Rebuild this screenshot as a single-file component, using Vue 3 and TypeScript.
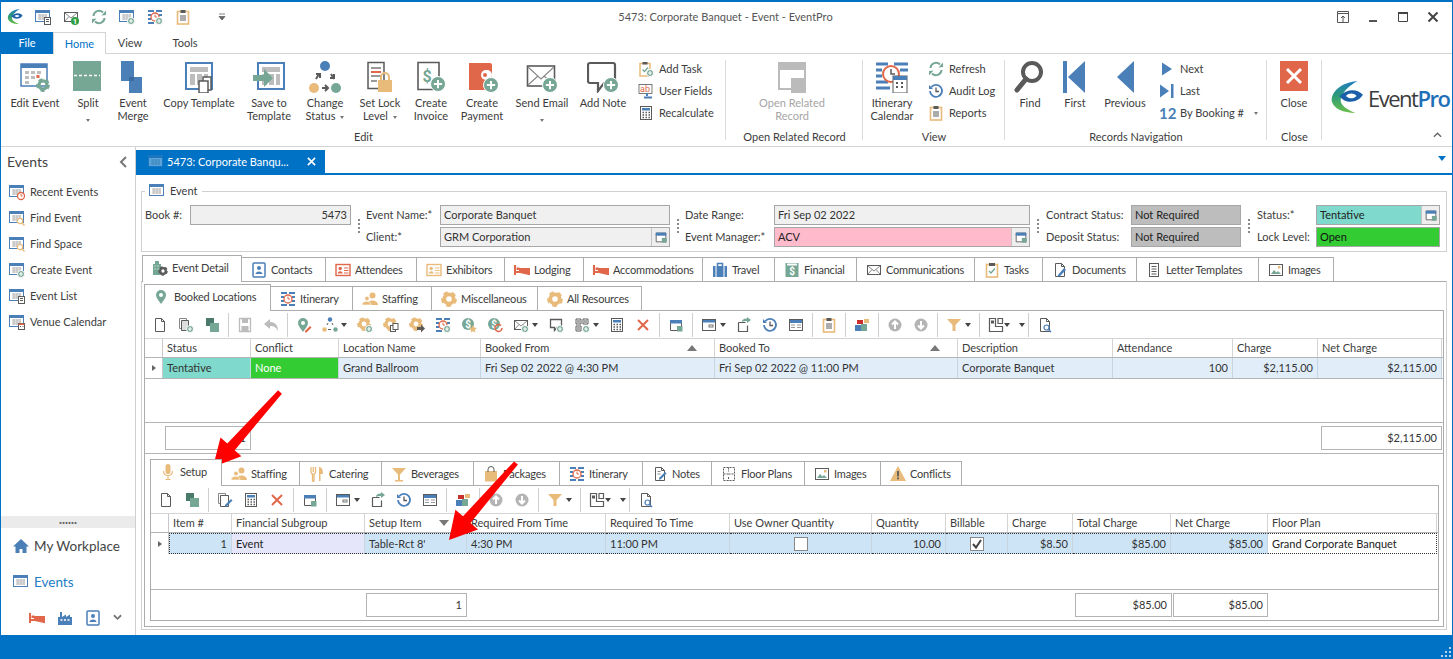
<script setup lang="ts">
const B = '#4a7fb8', G = '#76a795', O = '#e0674a', T = '#e9bb7b', D = '#5a5a5a', L = '#bcbcbc';

const plus = (x: number, y: number, r = 4) =>
  `<circle cx="${x}" cy="${y}" r="${r}" fill="${G}" stroke="#fff"/><path d="M${x - r * 0.55} ${y}h${r * 1.1}M${x} ${y - r * 0.55}v${r * 1.1}" stroke="#fff" stroke-width="${r > 5 ? 2 : 1.2}"/>`;
const gear = (x: number, y: number, r: number, c = T) =>
  `<circle cx="${x}" cy="${y}" r="${r * 0.62}" fill="none" stroke="${c}" stroke-width="${r * 0.5}"/><circle cx="${x}" cy="${y}" r="${r * 0.9}" fill="none" stroke="${c}" stroke-width="${r * 0.32}" stroke-dasharray="${r * 0.62} ${r * 0.52}"/>`;
const cal = `<rect x=".5" y="1.5" width="14" height="11" fill="#fff" stroke="${B}"/><rect x="1" y="2" width="13" height="2" fill="${B}"/><path d="M3 6h9M3 8h9M3 10h9M5 5v6M8 5v6M11 5v6" stroke="#b9b9b9"/>`;
const win = `<path d="M2.5 3.5h11v10h-11z" fill="#fff" stroke="${D}"/><rect x="2" y="3" width="12" height="3.5" fill="${B}"/><rect x="9" y="9" width="5.5" height="5.5" fill="${G}"/>`;
const itin = `<path d="M1 2h6M9 2h6M1 6h3M1 10h3M1 14h6M9 14h6M12 6h3M12 10h3" stroke="${B}" stroke-width="2"/><circle cx="8" cy="8" r="4" fill="#fff" stroke="${O}" stroke-width="1.3"/><path d="M8 5.5V8h2" stroke="${O}" fill="none"/>`;
const doc = `<path d="M3.5 1.5h6l3 3v10h-9z" fill="#fff" stroke="${D}"/><path d="M9.5 1.5v3h3" fill="none" stroke="${D}"/>`;
const mail = `<rect x="1.5" y="3.5" width="13" height="9" fill="#fff" stroke="${D}"/><path d="M2 4l6 5 6-5M2 12l4-4.5M14 12l-4-4.5" fill="none" stroke="#8a8a8a"/>`;
const bubble = `<path d="M2.5 2.5h11v8H9l-2.5 3v-3h-4z" fill="#fff" stroke="${D}" stroke-width="1.3"/>`;
const calc = `<rect x="2.5" y="1.5" width="11" height="13" fill="#fff" stroke="${D}"/><rect x="4" y="3" width="8" height="2.5" fill="${B}"/><path d="M4.5 7.5h1.5M7.5 7.5H9M10.5 7.5H12M4.5 10h1.5M7.5 10H9M10.5 10H12M4.5 12.5h1.5M7.5 12.5H9M10.5 12.5H12" stroke="${D}" stroke-width="1.3"/>`;
const clip = `<rect x="2.5" y="2.5" width="11" height="12.5" fill="#fff" stroke="${T}" stroke-width="1.6"/><rect x="5.5" y="1" width="5" height="3" fill="${D}"/><path d="M5 7h6M5 9h6M5 11h6" stroke="${D}"/>`;
const coin = (c = G) => `<circle cx="7" cy="7" r="6" fill="${c}"/><text x="7" y="10.5" font-size="10" font-family="Roboto" font-weight="700" text-anchor="middle" fill="#fff">$</text>`;
const grid4 = `<path d="M2 2h5v5H2zM9 2h5v5H9zM2 9h5v5H2z" fill="#fff" stroke="${D}"/><path d="M3 3h3v3H3zM10 3h3v3h-3zM3 10h3v3H3z" fill="#a9a9a9"/>`;
const boxes = `<rect x="1" y="8" width="6" height="6" fill="${B}"/><rect x="7" y="7" width="6" height="7" fill="${G}"/><rect x="3" y="3" width="6" height="4" fill="#c9302c"/><rect x="10" y="2" width="5" height="4" fill="${T}"/>`;
const card = (c: string) => `<rect x="1" y="2.5" width="14" height="11" fill="#fff" stroke="${c}" stroke-width="1.4"/><circle cx="5.2" cy="6.5" r="1.7" fill="${c}"/><path d="M2.8 11.5c0-3 4.8-3 4.8 0z" fill="${c}"/><path d="M9 6h4.5M9 8.5h4.5M9 11h4.5" stroke="${c}"/>`;
const bed = `<path d="M1 3v10M1 10h14v3M15 10V7H6V10" stroke="${O}" stroke-width="2" fill="${O}"/><rect x="2.5" y="5.5" width="3" height="2.5" fill="${O}"/>`;
const people = `<circle cx="10.5" cy="4.5" r="3" fill="${T}"/><path d="M5 14c0-6 11-6 11 0z" fill="${T}"/><circle cx="5" cy="7.5" r="2.2" fill="${T}" stroke="#fff" stroke-width=".6"/><path d="M0 14c0-5 9-5 9 0z" fill="${T}" stroke="#fff" stroke-width=".6"/>`;
const picture = `<rect x="1.5" y="2.5" width="13" height="11" fill="#fff" stroke="${D}"/><path d="M3 12l3-4 2.5 2.5L10 9l3 3z" fill="${G}"/><rect x="10" y="4" width="2.5" height="2.5" fill="${T}"/>`;
const ud = (d: string) => `<circle cx="8" cy="8" r="6.5" fill="#b4b4b4"/><path d="${d}" stroke="#fff" stroke-width="2" fill="none"/>`;
const clock = `<path d="M3.2 4.2A6 6 0 1 1 2 8" fill="none" stroke="${B}" stroke-width="1.8"/><path d="M1 2v4h4z" fill="${B}"/><path d="M8 4.5V8.500h3" fill="none" stroke="${D}" stroke-width="1.3"/>`;
const table = `<rect x="1.5" y="2.5" width="13" height="11" fill="#fff" stroke="${D}"/><rect x="2" y="3" width="12" height="3" fill="${B}"/><path d="M3 8h4M3 10.500h4M9 8h4M9 10.500h4" stroke="#999" stroke-width="1.2"/>`;
const funnel = `<path d="M1 2h14l-5.500 6v6h-3V8z" fill="${T}"/>`;
const layout = `<path d="M1.500 1.500h6v8h7v5h-13zM10 1.500h4.500v5H10z" fill="#fff" stroke="${D}" stroke-width="1.200"/><rect x="3" y="3.500" width="3" height="3" fill="${D}"/>`;
const gridwin = `<rect x="1.500" y="2.500" width="13" height="11" fill="#fff" stroke="${D}"/><rect x="2" y="3" width="12" height="2.500" fill="${B}"/><rect x="8" y="8" width="4" height="2" fill="none" stroke="#777"/>`;
const exportI = `<path d="M2.500 5.500h7M2.500 5.500v9h9v-6" fill="none" stroke="${D}" stroke-width="1.200"/><path d="M6 5c0-3 3-3.500 5-3.500V0l4 3-4 3V4C9 4 7 4 6 5z" fill="${G}"/>`;
const searchDoc = `${doc}<circle cx="9.500" cy="10.500" r="2.500" fill="#fff" stroke="${B}" stroke-width="1.200"/><path d="M11.500 12.500l2.500 2.500" stroke="${B}" stroke-width="1.400"/>`;
const tree = `<circle cx="8" cy="2.500" r="2.200" fill="${B}"/><circle cx="2.500" cy="12.500" r="2.200" fill="${T}"/><circle cx="13.500" cy="12.500" r="2.200" fill="${G}"/><path d="M6 12.500h3M5 8l1-2M11 8l-1-2" stroke="${D}"/>`;
const pin = `<path d="M7 1a5 5 0 0 1 5 5c0 3-3 6-5 9-2-3-5-6-5-9a5 5 0 0 1 5-5z" fill="${G}"/><circle cx="7" cy="6" r="2" fill="#fff"/>`;

const icons: Record<string, string> = {
  editEvent: `<rect x="2" y="3" width="26" height="22" fill="#fff" stroke="${B}" stroke-width="1.500"/><rect x="2" y="3" width="26" height="4" fill="${B}"/><path d="M6 10h4v3H6zM12 10h4v3h-4zM18 10h4v3h-4zM6 15h4v3H6zM12 15h4v3h-4zM6 20h4v3H6z" fill="#bdbdbd"/><rect x="17.500" y="14" width="3" height="3" fill="${O}"/>${gear(24, 24, 6.500, G)}`,
  split: `<rect x="1" y="0" width="28" height="13" fill="${G}"/><rect x="1" y="16" width="28" height="14" fill="${G}"/><rect x="1" y="13" width="28" height="3" fill="${G}"/><path d="M2 14.500h26" stroke="#fff" stroke-width="1.500" stroke-dasharray="3 2"/>`,
  merge: `<rect x="4" y="0" width="13" height="20" fill="${B}"/><rect x="12" y="16" width="13" height="16" fill="${B}"/><rect x="12" y="16" width="5" height="4" fill="#3a6ba0"/>`,
  copyT: `<rect x="3" y="2" width="26" height="26" fill="#fff" stroke="${B}" stroke-width="2"/><rect x="7" y="6" width="18" height="5" fill="#bdbdbd"/><path d="M7 13h5v11H7zM14 13h5v11h-5zM21 13h4v11h-4z" fill="#bdbdbd"/><rect x="20" y="16" width="8" height="13" fill="#fff" stroke="${D}" stroke-width="1.500"/><rect x="16" y="20" width="9" height="12" fill="#fff" stroke="${D}" stroke-width="1.500"/>`,
  saveT: `<rect x="5" y="2" width="26" height="26" fill="#fff" stroke="${B}" stroke-width="2"/><rect x="9" y="6" width="18" height="5" fill="#bdbdbd"/><path d="M9 13h5v11H9zM16 13h5v11h-5zM23 13h4v11h-4z" fill="#bdbdbd"/><path d="M0 14h11V8l9 9-9 9v-6H0z" fill="${G}"/>`,
  change: `<circle cx="16" cy="5" r="5" fill="${B}"/><circle cx="5" cy="27" r="5" fill="${T}"/><circle cx="27" cy="27" r="5" fill="${G}"/><path d="M13 27h6M16 24l3 3-3 3M10 13l-3 5M11 17v-4H7M22 13l3 5M21 17h4v-4" fill="none" stroke="${D}" stroke-width="2"/>`,
  lock: `<path d="M4 1.500h16v26H4z" fill="#fff" stroke="${D}" stroke-width="1.500"/><path d="M7 7h10M7 20h6" stroke="#999" stroke-width="2"/><path d="M7 11h10" stroke="${O}" stroke-width="2"/><path d="M7 15h10" stroke="#999" stroke-width="2"/><rect x="14" y="19" width="14" height="12" fill="${T}"/><path d="M17 19v-3a4 4 0 0 1 8 0v3" fill="none" stroke="${T}" stroke-width="2"/>`,
  invoice: `<path d="M3 1.500h21v27H3z" fill="#fff" stroke="${D}" stroke-width="1.600"/><text x="12" y="21" font-family="Roboto" font-size="16" font-weight="700" text-anchor="middle" fill="${G}">$</text>${plus(23, 23, 7.500)}`,
  payment: `<path d="M3 2h21a2 2 0 0 1 2 2v25H3z" fill="${O}"/><rect x="15" y="9" width="11" height="10" rx="5" fill="#fff"/><circle cx="19" cy="14" r="2" fill="${O}"/>${plus(25, 24, 7.500)}`,
  email: `<rect x="1.500" y="5" width="27" height="20" fill="#fff" stroke="${D}" stroke-width="1.600"/><path d="M2 6l13 12L28 6M2 24l10-9M28 24l-10-9" fill="none" stroke="#8a8a8a" stroke-width="1.200"/>${plus(24, 24, 7.500)}`,
  note: `<path d="M3 2h23a2 2 0 0 1 2 2v18H17l-6 8v-8H3a2 2 0 0 1-2-2V4a2 2 0 0 1 2-2z" fill="#fff" stroke="${D}" stroke-width="2.200"/>${plus(24, 24, 7.500)}`,
  related: `<rect x="3" y="2" width="26" height="26" fill="#fff" stroke="#bbb" stroke-width="2"/><rect x="3" y="2" width="26" height="7" fill="#bbb"/><rect x="15" y="17" width="15" height="15" fill="#bbb"/>`,
  itinerary: `<path d="M0 3h12M18 3h14M0 9h6M0 15h6M0 21h12M0 27h14" stroke="${B}" stroke-width="3"/><path d="M24 9h8" stroke="${B}" stroke-width="3"/><circle cx="15" cy="13" r="8" fill="#fff" stroke="${O}" stroke-width="2"/><path d="M15 8v5h4" stroke="${D}" fill="none" stroke-width="1.500"/><rect x="17" y="15" width="14" height="17" fill="#fff" stroke="${D}"/><rect x="17" y="15" width="14" height="4" fill="${B}"/><path d="M20 22h2M25 22h2M20 26h2M25 26h2" stroke="${D}" stroke-width="2"/>`,
  find: `<circle cx="18" cy="11" r="9" fill="#fff" stroke="${D}" stroke-width="4"/><path d="M12 18L3 29" stroke="${D}" stroke-width="5" stroke-linecap="round"/>`,
  first: `<rect x="4" y="0" width="4" height="32" fill="${B}"/><path d="M26 0v32L9 16z" fill="${B}"/>`,
  prev: `<path d="M25 0v32L8 16z" fill="${B}"/>`,
  close: `<rect x="2" y="0" width="28" height="30" fill="${O}"/><path d="M9 8l14 14M23 8L9 22" stroke="#fff" stroke-width="3"/>`,
  task: `<rect x="2" y="2.500" width="10" height="12.500" fill="#fff" stroke="${T}" stroke-width="1.500"/><rect x="4.500" y="1" width="5" height="2.500" fill="${D}"/><path d="M4.500 8.500l2 2 3.500-4" fill="none" stroke="${G}" stroke-width="1.300"/>${plus(12, 12, 3.500)}`,
  fields: `<rect x="1" y="1.500" width="13" height="9" fill="#fff" stroke="${D}" stroke-width=".8"/><text x="7" y="9" font-family="Roboto" font-size="9" fill="${O}" text-anchor="middle">ab</text><path d="M9 10v3M6 14.500h8" stroke="${B}" stroke-width="2"/>`,
  calc,
  refresh: `<path d="M2.500 7A5.500 5.500 0 0 1 12 3.500M13.500 9A5.500 5.500 0 0 1 4 12.500" fill="none" stroke="${G}" stroke-width="2"/><path d="M10.500 6.500L15 6V1.500zM5.500 9.500L1 10v4.500z" fill="${G}"/>`,
  clock, clip,
  next: `<path d="M3 1.500v13L13 8z" fill="${B}"/>`,
  last: `<path d="M1 1.500v13L10 8z" fill="${B}"/><rect x="12" y="1" width="2.500" height="14" fill="${B}"/>`,
  cal,
  swirl: `<defs><linearGradient id="swirlGrad" x1="0" y1="0" x2="0" y2="1"><stop offset="0" stop-color="#1f7cc4"/><stop offset=".45" stop-color="#2b9a7a"/><stop offset="1" stop-color="#6cc04a"/></linearGradient></defs><path d="M13 0C3 1 0 7 1 10c1 3 5 5 11 5-5-2-7-4-7-6 0-3 4-7 8-9z" fill="url(#swirlGrad)"/><path d="M4.500 7C8 3.500 13 3.500 15.500 6.500 13 10.500 7 11 4.500 7z" fill="#1a5fa8"/><path d="M7.500 7C9 5.500 11 5.500 12.500 7 11 8.500 9 8.500 7.500 7z" fill="#fff"/>`,
  calList: `${cal}<rect x="9.500" y="8.500" width="6" height="7" fill="#fff" stroke="${D}"/><path d="M11 10.500h3M11 12.500h3" stroke="${D}"/>`,
  mailN: `${mail}<circle cx="12" cy="12" r="4" fill="#2f9e44"/><text x="12" y="15" font-size="7" font-family="Roboto" font-weight="700" text-anchor="middle" fill="#fff">1</text>`,
  calPlus: `${cal}${plus(12, 12, 3.500)}`,
  itinPlus: `${itin}${plus(12, 12, 3.500)}`,
  new: doc,
  copies: `<path d="M1.500 1.500h7v10h-7z" fill="#fff" stroke="#888"/><path d="M3.500 3.500h7v10h-7z" fill="#ddd" stroke="${D}"/>${plus(12, 12, 3.500)}`,
  copyEdit: `<path d="M1.500 1.500h7v10h-7z" fill="#fff" stroke="#888"/><path d="M3.500 3.500h8v11h-8z" fill="#fff" stroke="${D}"/><path d="M8 13l6-6 1.500 1.500-6 6H8z" fill="${B}"/>`,
  dup: `<rect x="2" y="1" width="8" height="8" fill="#4a7a6c"/><rect x="6" y="6" width="9" height="9" fill="${G}"/>`,
  save: `<path d="M2.500 1.500h11v13h-11z" fill="#fff" stroke="${L}" stroke-width="1.300"/><rect x="5" y="2" width="6" height="4" fill="${L}"/><rect x="4.500" y="9" width="7" height="5" fill="${L}"/>`,
  undo: `<path d="M1 7l6-5v3c5 0 8 3 8 9-2-4-4-5-8-5v3z" fill="${L}"/>`,
  pinEdit: `${pin}<path d="M9 14l5-5 1.500 1.500-5 5H9z" fill="${O}"/>`,
  tree,
  gearPlus: `${gear(7, 7, 6.500)}${plus(12, 12, 3.500)}`,
  gearCopy: `${gear(7, 7, 6.500)}<rect x="7.500" y="8.500" width="5" height="6" fill="#fff" stroke="${D}"/><rect x="10" y="6.500" width="5" height="6" fill="#fff" stroke="${D}"/>`,
  gearArrow: `${gear(7, 7, 6.500)}<path d="M8 10h4V7.500l4 4-4 4V13H8z" fill="${D}"/>`,
  coinStar: `${coin()}<path d="M12 8l1.200 2.600 2.800.3-2.100 1.900.6 2.800-2.500-1.400-2.500 1.400.6-2.800L8 10.900l2.800-.3z" fill="${T}"/>`,
  coinRef: `${coin()}<path d="M15 11a3.500 3.500 0 1 1-1-2.500" fill="none" stroke="${O}" stroke-width="1.500"/>`,
  mailPlus: `${mail}${plus(12, 12, 3.500)}`,
  notePlus: `${bubble}${plus(12, 12, 3.500)}`,
  gridPlus: `${grid4}${plus(12, 12, 3.500)}`,
  x: `<path d="M3 3l10 10M13 3L3 13" stroke="${O}" stroke-width="2"/>`,
  win, gridwin, exportI, table, boxes, funnel, layout, searchDoc,
  up: ud('M8 12V5M5 7.500l3-3 3 3'),
  down: ud('M8 4v7M5 8.500l3 3 3-3'),
  building: `<path d="M1 15V4h2V1h4v3h2v11z" fill="${G}"/><path d="M2.500 6h1M5.500 6h1M2.500 9h1M5.500 9h1" stroke="#fff"/>${gear(11, 11, 4.500, D)}`,
  contacts: `<rect x="2" y="1" width="12" height="14" rx="1" fill="#fff" stroke="${B}" stroke-width="1.500"/><circle cx="8" cy="6" r="2" fill="${B}"/><path d="M4.500 12c0-3.500 7-3.500 7 0z" fill="${B}"/>`,
  attendees: card(O), exhibitors: card(T), bed,
  travel: `<rect x="1" y="4" width="14" height="11" fill="${B}"/><path d="M5.500 4V1.500h5V4" fill="none" stroke="${B}" stroke-width="1.500"/><path d="M4 4v11M12 4v11" stroke="#fff"/>`,
  financial: `<rect x="1.500" y="1" width="13" height="14" fill="${G}"/><rect x="3" y="1.500" width="10" height="2" fill="#fff"/><text x="8" y="13" font-family="Roboto" font-size="10" font-weight="700" text-anchor="middle" fill="#fff">$</text>`,
  mail,
  tasks: `<rect x="2.500" y="2.500" width="11" height="12.500" fill="#fff" stroke="${T}" stroke-width="1.600"/><rect x="5" y="1" width="6" height="3" fill="${D}"/><path d="M5 9l2 2 4-4.500" fill="none" stroke="${G}" stroke-width="1.400"/>`,
  documents: `${doc}<path d="M6 13l6-7 2 2-6 6-2.500.5z" fill="${B}"/>`,
  letter: `<rect x="3.500" y="1.500" width="9" height="13" fill="#fff" stroke="${D}"/><path d="M5.500 4.500h5M5.500 7h5M5.500 9.500h5M5.500 12h5" stroke="${D}"/>`,
  picture, pin: pin, itin, people,
  gear: gear(8, 8, 7.500),
  mic: `<rect x="5.500" y="0" width="5" height="10" rx="2.500" fill="${T}"/><path d="M3.500 7c0 6 9 6 9 0M8 12v3M5.500 15.500h5" fill="none" stroke="${T}" stroke-width="1.200"/>`,
  fork: `<path d="M2 1v5c0 1 .8 2 1.500 2v7h1.500V8c.7 0 1.500-1 1.500-2V1M4.250 1v5" fill="none" stroke="${T}" stroke-width="1.300"/><path d="M10 15V1c3 0 4 3 4 7h-2.500v7z" fill="${T}"/>`,
  martini: `<path d="M1 2h14L9 8.500V14h3v1.500H4V14h3V8.500z" fill="${T}"/>`,
  bag: `<path d="M2 5h12v10.500H2z" fill="${T}"/><path d="M5 6V3.500a3 3 0 0 1 6 0V6" fill="none" stroke="${D}"/>`,
  notes: `${doc}<path d="M5.500 5.500h3M5.500 8h3" stroke="#888"/><path d="M7 12l6-6 1.500 1.500-6 6H7z" fill="${B}"/>`,
  floor: `<path d="M2.500 1.500h11v13h-11zM2.500 8h5M7.500 1.500v4M7.500 11v3.500M7.500 8h6" fill="#fff" stroke="${D}" stroke-dasharray="2 1"/>`,
  warn: `<path d="M8 0l8 15H0z" fill="${T}"/><path d="M8 5v5.500" stroke="${D}" stroke-width="1.800"/><rect x="7.100" y="11.500" width="1.800" height="1.800" fill="${D}"/>`,
  recent: `${cal}<circle cx="12" cy="12" r="3.500" fill="#fff" stroke="${O}" stroke-width="1.300"/><path d="M12 10v2h1.500" fill="none" stroke="${O}"/>`,
  findE: `${cal}<circle cx="11" cy="11" r="2.700" fill="#fff" stroke="${T}" stroke-width="1.200"/><path d="M13 13l2.500 2.500" stroke="${T}" stroke-width="1.400"/>`,
  venue: `${cal}<rect x="9.500" y="9.500" width="6" height="6" fill="#fff" stroke="${D}"/><rect x="9.500" y="9.500" width="6" height="1.500" fill="${O}"/><path d="M11 12.500h1M13.500 12.500h1" stroke="${D}"/>`,
  home: `<path d="M8 1L0 8.500h2.500V15h4v-4h3v4h4V8.500H16z" fill="${B}"/>`,
  factory: `<path d="M1 15V7h2V2h2v5l4-2.500V7l4-2.500V7h2v8z" fill="${B}"/><path d="M3.500 10h9" stroke="#fff" stroke-width="1.500" stroke-dasharray="2 1.500"/>`,
};

interface BigBtn { icon?: string; l1: string; l2?: string; w: number; dd?: 'inline' | 'below'; off?: boolean }
interface SmallBtn { icon?: string; num?: string; label: string; dd?: boolean }
interface SmallCol { small: SmallBtn[]; w: number; ml: number }
interface Group { w: number; label: string; pad?: number; items: (BigBtn | SmallCol)[] }

const groups: Group[] = [
  { w: 725, label: 'Edit', pad: 7, items: [
    { icon: 'editEvent', l1: 'Edit Event', w: 54 },
    { icon: 'split', l1: 'Split', w: 52, dd: 'below' },
    { icon: 'merge', l1: 'Event', l2: 'Merge', w: 38 },
    { icon: 'copyT', l1: 'Copy Template', w: 94 },
    { icon: 'saveT', l1: 'Save to', l2: 'Template', w: 46 },
    { icon: 'change', l1: 'Change', l2: 'Status', w: 66, dd: 'inline' },
    { icon: 'lock', l1: 'Set Lock', l2: 'Level', w: 44, dd: 'inline' },
    { icon: 'invoice', l1: 'Create', l2: 'Invoice', w: 58 },
    { icon: 'payment', l1: 'Create', l2: 'Payment', w: 44 },
    { icon: 'email', l1: 'Send Email', w: 76, dd: 'below' },
    { icon: 'note', l1: 'Add Note', w: 46 },
    { w: 80, ml: 12, small: [{ icon: 'task', label: 'Add Task' }, { icon: 'fields', label: 'User Fields' }, { icon: 'calc', label: 'Recalculate' }] },
  ] },
  { w: 137, label: 'Open Related Record', items: [{ icon: 'related', l1: 'Open Related', l2: 'Record', w: 132, off: true }] },
  { w: 142, label: 'View', items: [
    { icon: 'itinerary', l1: 'Itinerary', l2: 'Calendar', w: 58 },
    { w: 75, ml: 7, small: [{ icon: 'refresh', label: 'Refresh' }, { icon: 'clock', label: 'Audit Log' }, { icon: 'clip', label: 'Reports' }] },
  ] },
  { w: 262, label: 'Records Navigation', items: [
    { icon: 'find', l1: 'Find', w: 50 },
    { icon: 'first', l1: 'First', w: 40 },
    { icon: 'prev', l1: 'Previous', w: 60 },
    { w: 100, ml: 4, small: [{ icon: 'next', label: 'Next' }, { icon: 'last', label: 'Last' }, { num: '12', label: 'By Booking #', dd: true }] },
  ] },
  { w: 55, label: 'Close', items: [{ icon: 'close', l1: 'Close', w: 54 }] },
];

const isSmall = (i: BigBtn | SmallCol): i is SmallCol => 'small' in i;

const qat = ['swirl', 'calList', 'mailN', 'refresh', 'calPlus', 'itinPlus', 'clip'];

const sideItems = [
  { icon: 'recent', label: 'Recent Events' },
  { icon: 'findE', label: 'Find Event' },
  { icon: 'findE', label: 'Find Space' },
  { icon: 'calPlus', label: 'Create Event' },
  { icon: 'calList', label: 'Event List' },
  { icon: 'venue', label: 'Venue Calendar' },
];

interface Tab { label: string; icon: string; w: number }
const mainTabs: Tab[] = [
  { label: 'Event Detail', icon: 'building', w: 100 }, { label: 'Contacts', icon: 'contacts', w: 85 },
  { label: 'Attendees', icon: 'attendees', w: 92 }, { label: 'Exhibitors', icon: 'exhibitors', w: 89 },
  { label: 'Lodging', icon: 'bed', w: 80 }, { label: 'Accommodations', icon: 'bed', w: 120 },
  { label: 'Travel', icon: 'travel', w: 73 }, { label: 'Financial', icon: 'financial', w: 83 },
  { label: 'Communications', icon: 'mail', w: 119 }, { label: 'Tasks', icon: 'tasks', w: 69 },
  { label: 'Documents', icon: 'documents', w: 95 }, { label: 'Letter Templates', icon: 'letter', w: 123 },
  { label: 'Images', icon: 'picture', w: 76 },
];
const subTabs: Tab[] = [
  { label: 'Booked Locations', icon: 'pin', w: 127 }, { label: 'Itinerary', icon: 'itin', w: 83 },
  { label: 'Staffing', icon: 'people', w: 80 }, { label: 'Miscellaneous', icon: 'gear', w: 107 },
  { label: 'All Resources', icon: 'gear', w: 105 },
];
const lowTabs: Tab[] = [
  { label: 'Setup', icon: 'mic', w: 72 }, { label: 'Staffing', icon: 'people', w: 79 },
  { label: 'Catering', icon: 'fork', w: 83 }, { label: 'Beverages', icon: 'martini', w: 93 },
  { label: 'Packages', icon: 'bag', w: 87 }, { label: 'Itinerary', icon: 'itin', w: 84 },
  { label: 'Notes', icon: 'notes', w: 70 }, { label: 'Floor Plans', icon: 'floor', w: 94 },
  { label: 'Images', icon: 'picture', w: 77 }, { label: 'Conflicts', icon: 'warn', w: 82 },
];

type Tool = string; // icon name, "|" separator, trailing ">" = dropdown
const topTools: Tool[] = ['new', 'copies', 'dup', '|', 'save', 'undo', '|', 'pinEdit', 'tree>', 'gearPlus', 'gearCopy', 'gearArrow', 'itinPlus', 'coinStar', 'coinRef', 'mailPlus>', 'notePlus', 'gridPlus>', 'calc', 'x', '|', 'win', '|', 'gridwin>', 'exportI', 'clock', 'table', '|', 'clip', '|', 'boxes', '|', 'up', 'down', '|', 'funnel>', '|', 'layout>>', '|', 'searchDoc'];
const lowTools: Tool[] = ['new', 'dup', '|', 'copyEdit', 'calc', 'x', '|', 'win', '|', 'gridwin>', 'exportI', 'clock', 'table', '|', 'boxes', '|', 'up', 'down', '|', 'funnel>', '|', 'layout>>', '|', 'searchDoc'];
const toolName = (t: string) => t.replace(/>/g, '');
const toolClass = (t: string) => (t.endsWith('>>') ? 'tool wide' : t.endsWith('>') ? 'tool dd' : 'tool');

interface Col { label: string; w: number; text?: string; right?: boolean; bg?: string; color?: string; sort?: 'asc' | 'desc'; check?: boolean | null }
const topCols: Col[] = [
  { label: 'Status', w: 88, text: 'Tentative', bg: '#7fd9cc' },
  { label: 'Conflict', w: 88, text: 'None', bg: '#33cc33', color: '#fff' },
  { label: 'Location Name', w: 142, text: 'Grand Ballroom' },
  { label: 'Booked From', w: 234, text: 'Fri Sep 02 2022 @ 4:30 PM', sort: 'asc' },
  { label: 'Booked To', w: 243, text: 'Fri Sep 02 2022 @ 11:00 PM', sort: 'asc' },
  { label: 'Description', w: 155, text: 'Corporate Banquet' },
  { label: 'Attendance', w: 120, text: '100', right: true },
  { label: 'Charge', w: 85, text: '$2,115.00', right: true },
  { label: 'Net Charge', w: 124, text: '$2,115.00', right: true },
];
const lowCols: Col[] = [
  { label: 'Item #', w: 63, text: '1', right: true },
  { label: 'Financial Subgroup', w: 133, text: 'Event', bg: '#e6e6fa', color: '#222' },
  { label: 'Setup Item', w: 102, text: "Table-Rct 8'", sort: 'desc' },
  { label: 'Required From Time', w: 139, text: '4:30 PM' },
  { label: 'Required To Time', w: 124, text: '11:00 PM' },
  { label: 'Use Owner Quantity', w: 142, check: false },
  { label: 'Quantity', w: 74, text: '10.00', right: true },
  { label: 'Billable', w: 62, check: true },
  { label: 'Charge', w: 65, text: '$8.50', right: true },
  { label: 'Total Charge', w: 98, text: '$85.00', right: true },
  { label: 'Net Charge', w: 97, text: '$85.00', right: true },
  { label: 'Floor Plan', w: 169, text: 'Grand Corporate Banquet', bg: '#fff', color: '#222' },
];

const topFoot = [{ left: 2, w: 86, text: '1' }, { left: 1070, w: 121, text: '$2,115.00' }];
const lowFoot = [{ left: 215, w: 101, text: '1' }, { left: 608, w: 97, text: '$85.00' }, { left: 1, w: 95, text: '$85.00' }];

const arrow = (x1: number, y1: number, x2: number, y2: number, sw: number, hl: number, hw: number) => {
  const len = Math.hypot(x2 - x1, y2 - y1);
  const ux = (x2 - x1) / len, uy = (y2 - y1) / len;
  const nx = -uy, ny = ux;
  const bx = x2 - ux * hl, by = y2 - uy * hl;
  const p = (x: number, y: number) => `${x.toFixed(1)},${y.toFixed(1)}`;
  return [
    p(x1 + nx * sw * 0.5, y1 + ny * sw * 0.5), p(bx + nx * sw, by + ny * sw), p(bx + nx * hw, by + ny * hw), p(x2, y2),
    p(bx - nx * hw, by - ny * hw), p(bx - nx * sw, by - ny * sw), p(x1 - nx * sw * 0.5, y1 - ny * sw * 0.5),
  ].join(' ');
};
const arrows = [arrow(280, 392, 213, 467, 5, 27, 14), arrow(516, 463, 449, 540, 5, 27, 15)];
</script>

<template>
  <div class="stage">
    <div class="app">
      <header class="titlebar">
        <div class="qat">
          <svg v-for="q in qat" :key="q" class="i16" viewBox="0 0 16 16" v-html="icons[q]"></svg>
          <svg class="qat-caret" viewBox="0 0 8 8"><path d="M1 1h6M1 3.500h6L4 7z" stroke="#666" fill="#666" stroke-width=".8" /></svg>
        </div>
        <div class="title">5473: Corporate Banquet - Event - EventPro</div>
        <div class="winbtns">
          <svg class="i14" viewBox="0 0 14 14"><path d="M1.500 1.500h11v11h-11zM1.500 3.500h11M7 12V6M5 8l2-2 2 2" fill="none" stroke="#555" /></svg>
          <svg class="i14" viewBox="0 0 14 14"><path d="M3 11h8" stroke="#555" stroke-width="2" /></svg>
          <svg class="i14" viewBox="0 0 14 14"><path d="M2.500 2.500h9v9h-9z" fill="none" stroke="#444" /><path d="M2 3h10" stroke="#444" stroke-width="2" /></svg>
          <svg class="i14" viewBox="0 0 14 14"><path d="M2.500 2.500l9 9M11.500 2.500l-9 9" stroke="#444" stroke-width="2" /></svg>
        </div>
      </header>

      <nav class="rtabs">
        <div class="rtab file">File</div>
        <div class="rtab home">Home</div>
        <div class="rtab view">View</div>
        <div class="rtab tools">Tools</div>
      </nav>

      <section class="ribbon">
        <div v-for="g in groups" :key="g.label" class="rgroup" :style="{ width: g.w + 'px' }">
          <div class="rgroup-body" :style="{ paddingLeft: (g.pad ?? 0) + 'px' }">
            <template v-for="(it, n) in g.items" :key="n">
              <div v-if="isSmall(it)" class="smallcol" :style="{ width: it.w + 'px', marginLeft: it.ml + 'px' }">
                <div v-for="s in it.small" :key="s.label" class="smallbtn">
                  <svg v-if="s.icon" class="i16" viewBox="0 0 16 16" v-html="icons[s.icon]"></svg>
                  <span v-else class="num12">{{ s.num }}</span>
                  <span>{{ s.label }}</span>
                  <i v-if="s.dd" class="caret small"></i>
                </div>
              </div>
              <div v-else class="bigbtn" :class="{ off: it.off }" :style="{ width: it.w + 'px' }">
                <svg class="i32" viewBox="0 0 32 32" v-html="icons[it.icon!]"></svg>
                <span class="bl">{{ it.l1 }}</span>
                <span class="bl">{{ it.l2 }}<i v-if="it.dd === 'inline'" class="caret small"></i></span>
                <i v-if="it.dd === 'below'" class="caret small below"></i>
              </div>
            </template>
          </div>
          <div class="rgroup-label">{{ g.label }}</div>
        </div>
        <div class="logo">
          <div class="logo-row">
            <svg class="swirl" viewBox="0 0 16 16" v-html="icons.swirl"></svg>
            <span class="logo-text"><span>Event</span><b>Pro</b></span>
          </div>
          <svg class="collapse" viewBox="0 0 10 6"><path d="M1 5l4-4 4 4" fill="none" stroke="#666" stroke-width="1.500" /></svg>
        </div>
      </section>

      <div class="body">
        <aside class="side">
          <div class="side-head">
            <span>Events</span>
            <svg class="side-chev" viewBox="0 0 8 12"><path d="M7 1L2 6l5 5" fill="none" stroke="#777" stroke-width="2" /></svg>
          </div>
          <div v-for="s in sideItems" :key="s.label" class="side-item">
            <svg class="i16" viewBox="0 0 16 16" v-html="icons[s.icon]"></svg>
            <span>{{ s.label }}</span>
          </div>
          <div class="side-fill"></div>
          <div class="side-split">······</div>
          <div class="side-nav">
            <svg class="i16" viewBox="0 0 16 16" v-html="icons.home"></svg><span>My Workplace</span>
          </div>
          <div class="side-nav active">
            <svg class="i16" viewBox="0 0 16 16" v-html="icons.cal"></svg><span>Events</span>
          </div>
          <div class="side-mini">
            <svg class="i16" viewBox="0 0 16 16" v-html="icons.bed"></svg>
            <svg class="i16" viewBox="0 0 16 16" v-html="icons.factory"></svg>
            <svg class="i16" viewBox="0 0 16 16" v-html="icons.contacts"></svg>
            <svg class="mini-chev" viewBox="0 0 10 7"><path d="M1 1l4 4 4-4" fill="none" stroke="#777" stroke-width="2" /></svg>
          </div>
        </aside>

        <main class="main">
          <div class="docstrip">
            <div class="doctab">
              <svg class="i16 dim" viewBox="0 0 16 16" v-html="icons.cal"></svg>
              <span class="doctab-text">5473: Corporate Banqu...</span>
              <svg class="doctab-x" viewBox="0 0 10 10"><path d="M1 1l8 8M9 1l-8 8" stroke="#fff" stroke-width="1.800" /></svg>
            </div>
            <i class="docdrop"></i>
          </div>

          <fieldset class="eventbox">
            <legend>
              <svg class="i16" viewBox="0 0 16 16" v-html="icons.cal"></svg>
              <span>Event</span>
            </legend>
            <div class="evgrid">
              <label>Book #:</label>
              <div class="fld right">5473</div>
              <div class="dots"></div>
              <label>Event Name:*</label>
              <div class="fld">Corporate Banquet</div>
              <div class="dots"></div>
              <label>Date Range:</label>
              <div class="fld">Fri Sep 02 2022</div>
              <div class="dots"></div>
              <label>Contract Status:</label>
              <div class="fld grey">Not Required</div>
              <div class="dots"></div>
              <label>Status:*</label>
              <div class="fld teal">Tentative<span class="pick"><svg class="i14" viewBox="0 0 16 16" v-html="icons.win"></svg></span></div>

              <label></label>
              <div></div>
              <label>Client:*</label>
              <div class="fld">GRM Corporation<span class="pick"><svg class="i14" viewBox="0 0 16 16" v-html="icons.win"></svg></span></div>
              <label>Event Manager:*</label>
              <div class="fld pink">ACV<span class="pick"><svg class="i14" viewBox="0 0 16 16" v-html="icons.win"></svg></span></div>
              <label>Deposit Status:</label>
              <div class="fld grey">Not Required</div>
              <label>Lock Level:</label>
              <div class="fld lime">Open</div>
            </div>
          </fieldset>

          <div class="tabstrip main-tabs">
            <div v-for="(t, i) in mainTabs" :key="t.label + i" class="tab" :class="{ sel: i === 0 }" :style="{ width: t.w + 'px' }">
              <svg class="i16" viewBox="0 0 16 16" v-html="icons[t.icon]"></svg><span>{{ t.label }}</span>
            </div>
          </div>
          <div class="panel outer">
            <div class="tabstrip">
              <div v-for="(t, i) in subTabs" :key="t.label + i" class="tab" :class="{ sel: i === 0 }" :style="{ width: t.w + 'px' }">
                <svg class="i16" viewBox="0 0 16 16" v-html="icons[t.icon]"></svg><span>{{ t.label }}</span>
              </div>
            </div>
            <div class="panel inner">
              <div class="toolbar top">
                <template v-for="(t, i) in topTools" :key="i">
                  <span v-if="t === '|'" class="tsep"></span>
                  <span v-else :class="toolClass(t)">
                    <svg class="i16" viewBox="0 0 16 16" v-html="icons[toolName(t)]"></svg>
                    <i v-if="t.endsWith('>')" class="caret"></i>
                  </span>
                </template>
              </div>
              <div class="grid top-grid">
                <div class="ghead">
                  <div class="rowhead"></div>
                  <div v-for="c in topCols" :key="c.label" class="hcell" :style="{ width: c.w + 'px' }">
                    {{ c.label }}<i v-if="c.sort" class="sort" :class="c.sort"></i>
                  </div>
                </div>
                <div class="grow">
                  <div class="rowhead mark"><i></i></div>
                  <div v-for="c in topCols" :key="c.label" class="cell" :class="{ right: c.right }" :style="{ width: c.w + 'px', background: c.bg, color: c.color }">{{ c.text }}</div>
                </div>
                <div class="gfill"></div>
                <div class="gfoot">
                  <div v-for="(f, i) in topFoot" :key="i" class="fbox" :style="{ marginLeft: f.left + 'px', width: f.w + 'px' }">{{ f.text }}</div>
                </div>
              </div>

              <div class="lower">
                <div class="tabstrip">
                  <div v-for="(t, i) in lowTabs" :key="t.label + i" class="tab" :class="{ sel: i === 0 }" :style="{ width: t.w + 'px' }">
                    <svg class="i16" viewBox="0 0 16 16" v-html="icons[t.icon]"></svg><span>{{ t.label }}</span>
                  </div>
                </div>
                <div class="panel low">
                  <div class="toolbar lowbar">
                    <template v-for="(t, i) in lowTools" :key="i">
                      <span v-if="t === '|'" class="tsep"></span>
                      <span v-else :class="toolClass(t)">
                        <svg class="i16" viewBox="0 0 16 16" v-html="icons[toolName(t)]"></svg>
                        <i v-if="t.endsWith('>')" class="caret"></i>
                      </span>
                    </template>
                  </div>
                  <div class="grid low-grid">
                    <div class="ghead">
                      <div class="rowhead"></div>
                      <div v-for="c in lowCols" :key="c.label" class="hcell" :style="{ width: c.w + 'px' }">
                        {{ c.label }}<i v-if="c.sort" class="sort" :class="c.sort"></i>
                      </div>
                    </div>
                    <div class="grow focus">
                      <div class="rowhead mark"><i></i></div>
                      <div v-for="c in lowCols" :key="c.label" class="cell" :class="{ right: c.right, center: c.check !== undefined }" :style="{ width: c.w + 'px', background: c.bg, color: c.color }">
                        <span v-if="c.check !== undefined" class="check">
                          <svg v-if="c.check" viewBox="0 0 12 12"><path d="M2 6l3 3.500L10 2" fill="none" stroke="#444" stroke-width="2" /></svg>
                        </span>
                        <template v-else>{{ c.text }}</template>
                      </div>
                    </div>
                    <div class="gfill"></div>
                    <div class="gfoot">
                      <div v-for="(f, i) in lowFoot" :key="i" class="fbox" :style="{ marginLeft: f.left + 'px', width: f.w + 'px' }">{{ f.text }}</div>
                    </div>
                  </div>
                </div>
              </div>
            </div>
          </div>
        </main>
      </div>

      <footer class="status">
        <svg class="grip" viewBox="0 0 10 10"><path d="M8 0h2v2H8zM4 4h2v2H4zM8 4h2v2H8zM0 8h2v2H0zM4 8h2v2H4zM8 8h2v2H8z" fill="#b8d4ee" /></svg>
      </footer>
    </div>

    <svg class="arrows" viewBox="0 0 1453 659">
      <polygon v-for="(a, i) in arrows" :key="i" :points="a" fill="#f00" />
    </svg>
  </div>
</template>

<style>
html, body { margin: 0; background: #fff; }
</style>

<style scoped>
.stage { position: relative; width: 1453px; height: 659px; overflow: hidden; font: 11px/14px Lato, "Open Sans", sans-serif; color: #3c3c3c; }
.app { box-sizing: border-box; width: 1453px; height: 659px; display: flex; flex-direction: column; border: 1px solid #0072c6; border-top-width: 2px; border-bottom: 0; background: #fff; }
.i16 { width: 16px; height: 16px; flex: none; display: block; overflow: visible; }
.i14 { width: 14px; height: 14px; flex: none; display: block; }
.i32 { width: 32px; height: 32px; flex: none; display: block; }

.titlebar { height: 30px; flex: none; display: grid; grid-template-columns: 1fr auto 1fr; align-items: center; }
.qat { display: flex; align-items: center; gap: 12px; padding-left: 6px; }
.qat-caret { width: 8px; height: 8px; margin-left: 15px; }
.title { text-align: center; color: #555; margin-left: -2px; }
.winbtns { display: flex; justify-content: flex-end; gap: 16px; padding-right: 12px; }

.rtabs { height: 22px; flex: none; display: flex; border-bottom: 1px solid #d4d4d4; box-sizing: border-box; }
.rtab { display: flex; align-items: center; justify-content: center; height: 22px; box-sizing: border-box; }
.rtab.file { width: 52px; background: #0072c6; color: #fff; }
.rtab.home { width: 53px; color: #0072c6; border: 1px solid #d4d4d4; border-bottom: 0; background: #fff; }
.rtab.view { width: 48px; }
.rtab.tools { width: 62px; }

.ribbon { height: 93px; flex: none; display: flex; border-bottom: 1px solid #d4d4d4; box-sizing: border-box; }
.rgroup { flex: none; display: flex; flex-direction: column; position: relative; box-sizing: border-box; }
.rgroup::after { content: ""; position: absolute; right: 0; top: 6px; bottom: 6px; width: 1px; background: #dcdcdc; }
.rgroup-body { flex: 1; display: flex; padding-top: 7px; }
.rgroup-label { height: 16px; text-align: center; line-height: 14px; }
.bigbtn { flex: none; display: flex; flex-direction: column; align-items: center; position: relative; }
.bigbtn.off { color: #a5a5a5; }
.bl { height: 13px; line-height: 13px; white-space: nowrap; }
.bigbtn .i32 { margin-bottom: 3px; }
.caret { display: inline-block; border: 3px solid transparent; border-top: 4px solid #444; border-bottom: 0; }
.caret.small { border-width: 3px 2.500px 0; border-top-color: #777; margin-left: 5px; vertical-align: middle; }
.caret.below { margin: 2px 0 0; position: absolute; top: 56px; }
.smallcol { flex: none; display: flex; flex-direction: column; margin-top: -3px; }
.smallbtn { height: 22px; display: flex; align-items: center; gap: 5px; white-space: nowrap; }
.num12 { width: 16px; font-weight: 700; color: #4a7fb8; font-size: 15px; }
.logo { flex: 1; position: relative; display: flex; flex-direction: column; padding-left: 7px; }
.logo-row { display: flex; align-items: center; margin-top: 27px; }
.swirl { width: 36px; height: 34px; }
.logo-text { font-family: "Open Sans", sans-serif; font-size: 22px; line-height: 24px; letter-spacing: -1.500px; color: #3b3b3b; margin-left: 3px; }
.logo-text b { color: #1f6fb6; font-weight: 600; }
.collapse { position: absolute; right: 10px; bottom: 8px; width: 9px; height: 6px; }

.body { flex: 1; min-height: 0; display: flex; }
.side { width: 135px; flex: none; box-sizing: border-box; display: flex; flex-direction: column; border-right: 1px solid #cfcfcf; }
.side-head { height: 30px; flex: none; display: flex; align-items: center; justify-content: space-between; font-size: 14px; padding: 0 8px 0 6px; margin-bottom: 2px; color: #444; }
.side-chev { width: 8px; height: 12px; }
.side-item { height: 26px; flex: none; display: flex; align-items: center; gap: 5px; padding-left: 8px; }
.side-fill { flex: 1; }
.side-split { height: 12px; flex: none; background: #ebebeb; text-align: center; line-height: 11px; color: #666; font-weight: 700; }
.side-nav { height: 36px; flex: none; display: flex; align-items: center; gap: 5px; padding-left: 12px; font-size: 13.500px; color: #444; }
.side-nav.active { color: #1f7cc4; }
.side-mini { height: 35px; flex: none; display: flex; align-items: center; gap: 12px; padding-left: 28px; }
.mini-chev { width: 9px; height: 7px; }

.main { flex: 1; min-width: 0; display: flex; flex-direction: column; }
.docstrip { height: 28px; box-sizing: border-box; flex: none; display: flex; align-items: flex-end; justify-content: space-between; border-bottom: 2px solid #0072c6; }
.doctab { width: 189px; height: 23px; background: #0072c6; color: #fff; display: flex; align-items: center; padding-left: 12px; box-sizing: border-box; }
.dim { opacity: .35; margin-right: 3px; }
.doctab-text { width: 135px; white-space: nowrap; }
.doctab-x { width: 9px; height: 9px; margin-left: 5px; }
.docdrop { border: 4px solid transparent; border-top: 5px solid #0072c6; border-bottom: 0; margin: 0 6px 12px 0; }

.eventbox { box-sizing: border-box; width: 1306px; height: 69px; margin: 8px 0 0 5px; padding: 0 0 0 3px; border: 1px solid #d0d0d0; min-width: 0; }
.eventbox legend { display: flex; align-items: center; gap: 5px; padding: 0 5px 0 4px; margin-left: 0; height: 16px; }
.evgrid { display: grid; grid-template-columns: 45px 161px 15px 74px 230px 15px 89px 256px 16px 85px 110px 16px 59px 124px; grid-auto-rows: 20px; row-gap: 2px; margin-top: 6px; align-items: stretch; }
.evgrid label { display: flex; align-items: center; white-space: nowrap; }
.evgrid .dots { grid-row: span 2; width: 2px; justify-self: center; background: repeating-linear-gradient(#888 0 2px, transparent 2px 4px); height: 15px; align-self: center; }
.fld { box-sizing: border-box; border: 1px solid #a6a6a6; background: #f0f0f0; display: flex; align-items: center; padding: 0 3px; position: relative; white-space: nowrap; color: #333; }
.fld.right { justify-content: flex-end; }
.fld.grey { background: #bdbdbd; color: #222; }
.fld.teal { background: #7fd9cc; color: #222; }
.fld.pink { background: #ffbbcc; color: #222; }
.fld.lime { background: #33cc33; color: #111; }
.pick { position: absolute; right: 0; top: 0; bottom: 0; width: 17px; background: #eee; border-left: 1px solid #c4c4c4; display: flex; align-items: center; justify-content: center; }

.tabstrip { display: flex; flex: none; align-items: flex-end; }
.main-tabs { margin: 3px 0 0 6px; height: 26px; }
.tab { box-sizing: border-box; height: 24px; margin-right: -1px; flex: none; border: 1px solid #acacac; border-bottom: 0; display: flex; align-items: center; gap: 4px; padding-left: 9px; white-space: nowrap; background: #fff; letter-spacing: -.2px; }
.tab.sel { height: 27px; margin-bottom: -1px; position: relative; z-index: 1; padding-bottom: 2px; }
.panel { box-sizing: border-box; border: 1px solid #acacac; }
.panel.outer { width: 1306px; height: 349px; margin-left: 5px; padding: 2px; border-color: #d0d0d0; border-top-color: #acacac; display: flex; flex-direction: column; }
.panel.outer > .tabstrip { height: 26px; }
.panel.inner { flex: 1; min-height: 0; width: 1300px; display: flex; flex-direction: column; }

.toolbar { display: flex; align-items: center; flex: none; height: 28px; padding-left: 2px; }
.tool { width: 26px; height: 22px; flex: none; display: flex; align-items: center; justify-content: center; }
.tool.dd { width: 35px; justify-content: flex-start; padding-left: 5px; box-sizing: border-box; gap: 3px; }
.tool.wide { width: 42px; justify-content: flex-start; padding-left: 5px; box-sizing: border-box; }
.tool.wide::after { content: ""; margin-left: 9px; border: 3px solid transparent; border-top: 4px solid #444; border-bottom: 0; }
.tsep { width: 1px; height: 24px; background: #cfcfcf; margin: 0 3px; flex: none; }

.grid { display: flex; flex-direction: column; flex: none; }
.top-grid { height: 114px; }
.ghead { display: flex; height: 18px; flex: none; border-top: 1px solid #d4d4d4; border-bottom: 1px solid #b4b4b4; box-sizing: content-box; margin-top: -1px; }
.rowhead { width: 18px; flex: none; box-sizing: border-box; border-right: 1px solid #c8c8c8; display: flex; align-items: center; justify-content: center; }
.mark i { border: 3.500px solid transparent; border-left: 4px solid #666; border-right: 0; }
.hcell { box-sizing: border-box; flex: none; border-right: 1px solid #d4d4d4; padding-left: 4px; display: flex; align-items: center; justify-content: space-between; padding-right: 17px; white-space: nowrap; }
.sort { width: 0; height: 0; border-left: 5px solid transparent; border-right: 5px solid transparent; }
.sort.asc { border-bottom: 6px solid #777; }
.sort.desc { border-top: 6px solid #777; }
.grow { display: flex; height: 20px; flex: none; border-bottom: 1px solid #b4b4b4; }
.cell { box-sizing: border-box; flex: none; padding: 0 4px; display: flex; align-items: center; background: #e1eefa; border-right: 1px solid #c8d4df; white-space: nowrap; color: #333; }
.cell.right { justify-content: flex-end; }
.cell.center { justify-content: center; }
.low-grid .cell { background: #cde4f7; border-top: 1px dotted #333; border-bottom: 1px dotted #333; }
.low-grid .cell:nth-child(2) { border-left: 1px dotted #333; }
.low-grid .cell:last-child { border-right: 1px dotted #333; }
.grow.focus { border: 0; height: 21px; }
.check { width: 12px; height: 12px; border: 1px solid #888; background: #fff; display: block; }
.check svg { display: block; width: 12px; height: 12px; }
.gfill { flex: 1; }
.gfoot { height: 30px; flex: none; border-top: 1px solid #b4b4b4; display: flex; align-items: center; box-sizing: content-box; }
.top-grid .gfoot { padding-left: 18px; }
.fbox { box-sizing: border-box; flex: none; height: 24px; border: 1px solid #b4b4b4; display: flex; align-items: center; justify-content: flex-end; padding-right: 4px; color: #333; }

.lower { flex: 1; min-height: 0; display: flex; flex-direction: column; padding: 5px 4px 5px 5px; border-top: 1px solid #b4b4b4; }
.lower > .tabstrip { height: 26px; }
.panel.low { flex: 1; min-height: 0; display: flex; flex-direction: column; }
.low-grid { flex: 1; }

.status { height: 24px; box-sizing: border-box; flex: none; background: #0072c6; margin: 0 -1px; display: flex; justify-content: flex-end; align-items: flex-end; padding: 0 2px 2px 0; }
.grip { width: 10px; height: 10px; }

.arrows { position: absolute; inset: 0; width: 1453px; height: 659px; pointer-events: none; }
</style>
